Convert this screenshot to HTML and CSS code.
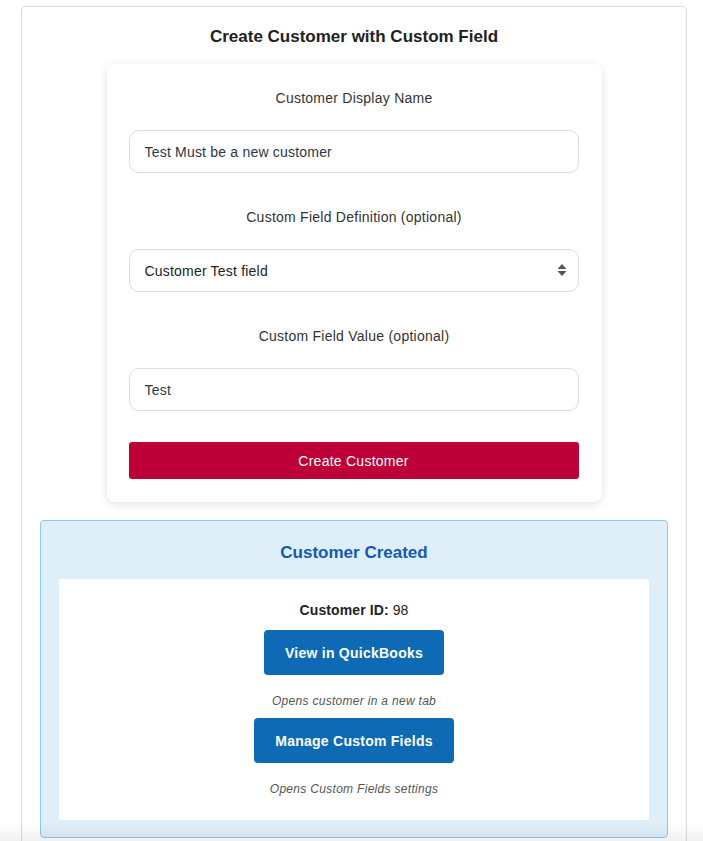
FILE: index.html
```html
<!DOCTYPE html>
<html lang="en">
<head>
<meta charset="utf-8">
<title>Create Customer with Custom Field</title>
<link rel="stylesheet" href="styles.css">
</head>
<body>
<div class="page">
  <div class="panel">
    <h2 class="title">Create Customer with Custom Field</h2>
    <form class="form-card">
      <label class="label" for="name">Customer Display Name</label>
      <input class="field" id="name" type="text" value="Test Must be a new customer">
      <label class="label" for="def">Custom Field Definition (optional)</label>
      <div class="select-wrap">
        <div class="field select" id="def">Customer Test field</div>
        <svg class="arrows" width="10" height="14" viewBox="0 0 10 14"><path d="M5 1 L9.5 6 H0.5 Z M5 13 L9.5 8 H0.5 Z" fill="#555"/></svg>
      </div>
      <label class="label" for="val">Custom Field Value (optional)</label>
      <input class="field" id="val" type="text" value="Test">
      <button class="submit" type="button">Create Customer</button>
    </form>
    <div class="result">
      <h3 class="result-title">Customer Created</h3>
      <div class="result-body">
        <p class="cid"><strong>Customer ID:</strong> 98</p>
        <a class="btn btn-qb">View in QuickBooks</a>
        <p class="hint">Opens customer in a new tab</p>
        <a class="btn btn-cf">Manage Custom Fields</a>
        <p class="hint">Opens Custom Fields settings</p>
      </div>
    </div>
  </div>
</div>
<div class="bottom-shade"></div>
</body>
</html>
```
FILE: styles.css
```css
* { box-sizing: border-box; }
html, body { margin: 0; padding: 0; background: #fff; }
body {
  font-family: "Liberation Sans", Arial, sans-serif;
  color: #333;
}
.page {
  padding: 6px 16px 0 21px;
}
.panel {
  width: 666px;
  border: 1px solid #ddd;
  border-radius: 5px;
  padding: 20px 18px 40px;
  display: flex;
  flex-direction: column;
  align-items: center;
}
.title {
  margin: 0;
  font-size: 17px;
  line-height: 20px;
  font-weight: bold;
  color: #222;
}
.form-card {
  margin-top: 17px;
  width: 495px;
  background: #fff;
  border-radius: 8px;
  box-shadow: 0 2px 10px rgba(0,0,0,0.12);
  padding: 25px 22px 23px;
  display: flex;
  flex-direction: column;
  align-items: stretch;
}
.label {
  display: block;
  text-align: center;
  font-size: 14px;
  line-height: 18px;
  letter-spacing: 0.25px;
  color: #333;
  margin-bottom: 23px;
}
.field {
  display: block;
  width: 450px;
  height: 43px;
  border: 1px solid #dcdcdc;
  border-radius: 10px;
  padding: 0 15px;
  font-family: "Liberation Sans", Arial, sans-serif;
  font-size: 14px;
  letter-spacing: 0.2px;
  color: #2d3748;
  background: #fff;
  margin: 0 0 35px;
  outline: none;
}
.select-wrap {
  position: relative;
}
.select {
  display: flex;
  align-items: center;
  color: #222;
}
.arrows {
  position: absolute;
  right: 13px;
  top: 14px;
}
.submit {
  margin-top: -4px;
  height: 37px;
  width: 450px;
  border: none;
  border-radius: 3px;
  background: #bd0037;
  color: #fff;
  font-family: "Liberation Sans", Arial, sans-serif;
  font-size: 14px;
  letter-spacing: 0.25px;
}
.result {
  margin-top: 18px;
  width: 628px;
  background: #deeffa;
  border: 1px solid #8ec8f5;
  border-radius: 4px;
  padding: 22px 18px 17px;
}
.result-title {
  margin: 0 0 17px;
  text-align: center;
  font-size: 17px;
  line-height: 19px;
  font-weight: bold;
  color: #1459b0;
}
.result-body {
  background: #fff;
  border-radius: 3px;
  padding: 23px 20px 24px;
  display: flex;
  flex-direction: column;
  align-items: center;
}
.cid {
  margin: 0 0 11px;
  font-size: 14px;
  line-height: 17px;
  letter-spacing: 0.1px;
  color: #222;
}
.btn {
  display: flex;
  align-items: center;
  justify-content: center;
  height: 45px;
  border-radius: 4px;
  background: #0e6ab5;
  color: #fff;
  font-weight: bold;
  font-size: 14px;
  letter-spacing: 0.25px;
  text-decoration: none;
}
.btn-qb { width: 180px; }
.btn-cf { width: 200px; }
.hint {
  margin: 19px 0 0;
  font-size: 12px;
  line-height: 14px;
  font-style: italic;
  letter-spacing: 0.3px;
  color: #555;
}
.hint + .btn { margin-top: 10px; }
.bottom-shade {
  position: fixed;
  left: 0;
  right: 0;
  bottom: 0;
  height: 18px;
  background: linear-gradient(to bottom, rgba(0,0,0,0), rgba(0,0,0,0.06));
  pointer-events: none;
}
```
